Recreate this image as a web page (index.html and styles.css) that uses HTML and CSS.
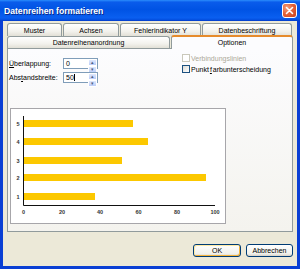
FILE: index.html
```html
<!DOCTYPE html>
<html lang="de">
<head>
    <meta charset="UTF-8">
    <title>Datenreihen formatieren</title>
    <link rel="stylesheet" href="styles.css">
</head>
<body>
    <div class="window">
        <div class="titlebar">
            <span class="title">Datenreihen formatieren</span>
            <span class="close">
                <svg width="9" height="9" viewBox="0 0 9 9"><path d="M1.5 1.5 L7.5 7.5 M7.5 1.5 L1.5 7.5" stroke="#fff" stroke-width="1.6" stroke-linecap="round"/></svg>
            </span>
        </div>

        <div class="dialog">
            <div class="tab-row top-row">
                <div class="tab tab-muster">Muster</div>
                <div class="tab tab-achsen">Achsen</div>
                <div class="tab tab-fehler">Fehlerindikator Y</div>
                <div class="tab tab-beschr">Datenbeschriftung</div>
            </div>
            <div class="tab-row bottom-row">
                <div class="tab tab-anord">Datenreihenanordnung</div>
                <div class="tab tab-opt active">Optionen</div>
            </div>

            <div class="panel">
                <div class="settings">
                    <div class="fields">
                        <label><u>Ü</u>berlappung:</label>
                        <div class="spin">
                            <span class="spin-value">0</span>
                            <span class="spin-btns"><span>&#9652;</span><span>&#9662;</span></span>
                        </div>
                        <label>Abs<u>t</u>andsbreite:</label>
                        <div class="spin">
                            <span class="spin-value">50<span class="caret"></span></span>
                            <span class="spin-btns"><span>&#9652;</span><span>&#9662;</span></span>
                        </div>
                    </div>
                    <div class="checks">
                        <div class="check disabled"><span class="box"></span>Verbindungslinien</div>
                        <div class="check"><span class="box"></span>Punkt<u>f</u>arbunterscheidung</div>
                    </div>
                </div>

                <div class="chart">
                    <svg width="214" height="114" viewBox="11 109 214 114">
                        <g fill="#fcc800">
                            <rect x="24" y="120" width="109" height="7"/>
                            <rect x="24" y="138" width="124" height="7"/>
                            <rect x="24" y="157" width="98" height="7"/>
                            <rect x="24" y="174" width="182" height="7"/>
                            <rect x="24" y="193" width="71" height="7"/>
                        </g>
                        <path d="M23.5 116 V205.5 H215" fill="none" stroke="#111" stroke-width="1"/>
                        <g font-family="Liberation Sans, Arial, sans-serif" font-size="5.5" font-weight="bold" fill="#333" text-anchor="middle">
                            <text x="18" y="125.5">5</text>
                            <text x="18" y="143.5">4</text>
                            <text x="18" y="162.5">3</text>
                            <text x="18" y="179.5">2</text>
                            <text x="18" y="198.5">1</text>
                            <text x="23.5" y="214">0</text>
                            <text x="62" y="214">20</text>
                            <text x="100" y="214">40</text>
                            <text x="138.5" y="214">60</text>
                            <text x="177" y="214">80</text>
                            <text x="215" y="214">100</text>
                        </g>
                    </svg>
                </div>
            </div>

            <div class="buttons">
                <button class="btn default">OK</button>
                <button class="btn">Abbrechen</button>
            </div>
        </div>
    </div>
</body>
</html>
```

FILE: styles.css
```css
body {
    margin: 0;
    font-family: "Liberation Sans", Arial, sans-serif;
    font-size: 7px;
    color: #000;
    background: #ffffff;
}

.window {
    width: 300px;
    height: 269px;
    display: flex;
    flex-direction: column;
    background: #0a3fd4;
}

.titlebar {
    height: 21px;
    flex: none;
    display: flex;
    align-items: center;
    justify-content: space-between;
    padding: 0 3px 0 4px;
    background: linear-gradient(to bottom, #2b8dfc 0%, #0a5ceb 10%, #0053e4 45%, #0a5ff0 85%, #0450e0 94%, #0339c8 100%);
}

.title {
    color: #fff;
    font-weight: bold;
    font-size: 8.6px;
    text-shadow: 1px 1px 0 #0a2a8a;
}

.close {
    width: 13px;
    height: 13px;
    display: flex;
    align-items: center;
    justify-content: center;
    border: 1px solid #fff;
    border-radius: 3px;
    background: radial-gradient(circle at 30% 30%, #f4a080 0%, #e3643a 45%, #c8401a 100%);
}

.dialog {
    flex: 1;
    margin: 0 3px 3px;
    padding: 2px 4px 0;
    background: #ece9d8;
    display: flex;
    flex-direction: column;
}

/* tabs */
.tab-row {
    display: flex;
    gap: 1px;
}

.top-row {
    height: 13px;
}

.bottom-row {
    height: 12px;
    gap: 1px;
}

.tab {
    box-sizing: border-box;
    display: flex;
    align-items: center;
    justify-content: center;
    border: 1px solid #919b9c;
    border-bottom: none;
    border-radius: 3px 3px 0 0;
    background: linear-gradient(to bottom, #ffffff, #f3f2ed 60%, #e2e0d6);
}

.tab-muster { width: 55px; }
.tab-achsen { width: 56px; }
.tab-fehler { width: 81px; }
.tab-beschr { width: 90px; }
.tab-anord { width: 163px; }
.tab-opt { flex: 1; }

.tab.active {
    position: relative;
    z-index: 1;
    height: 14px;
    margin-top: -1px;
    margin-bottom: -1px;
    border-top: 2px solid #e68b2c;
    background: #fcfcfe;
    padding-bottom: 1px;
}

/* panel */
.panel {
    box-sizing: border-box;
    height: 184px;
    border: 1px solid #919b9c;
    background: linear-gradient(to bottom, #fcfcfe, #f4f3ee);
    padding: 0 0 0 1px;
}

.settings {
    display: grid;
    grid-template-columns: 173px 1fr;
    height: 35px;
}

.fields {
    display: grid;
    grid-template-columns: 54px 35px;
    row-gap: 3px;
    align-items: center;
    margin-top: 9px;
    align-self: start;
}

.spin {
    box-sizing: border-box;
    height: 11px;
    display: flex;
    border: 1px solid #7f9db9;
    background: #fff;
}

.spin-value {
    flex: 1;
    padding-left: 2px;
    line-height: 9px;
}

.caret {
    display: inline-block;
    width: 1px;
    height: 7px;
    background: #000;
    vertical-align: -1px;
}

.spin-btns {
    width: 9px;
    display: flex;
    flex-direction: column;
    gap: 0;
}

.spin-btns span {
    flex: 1;
    display: flex;
    align-items: center;
    justify-content: center;
    font-size: 5px;
    line-height: 1;
    color: #4d6185;
    background: linear-gradient(to bottom, #dfe8fd, #bccdf8);
    border: 1px solid #fff;
    border-radius: 1px;
}

.checks {
    margin-top: 4px;
    display: flex;
    flex-direction: column;
    gap: 1px;
}

.check {
    height: 10px;
    display: flex;
    align-items: center;
    gap: 1px;
}

.check .box {
    box-sizing: border-box;
    width: 8px;
    height: 8px;
    border: 1px solid #1c5180;
    background: linear-gradient(135deg, #dcdcd7, #ffffff);
}

.check.disabled {
    color: #aca899;
}

.check.disabled .box {
    border-color: #cac8bb;
    background: #fff;
}

.chart {
    box-sizing: border-box;
    width: 216px;
    height: 116px;
    margin: 24px 0 0 1px;
    border: 1px solid #a7a6aa;
    background: #fff;
}

.chart svg {
    display: block;
}

/* buttons */
.buttons {
    display: flex;
    justify-content: flex-end;
    gap: 5px;
    margin-top: 12px;
}

.btn {
    box-sizing: border-box;
    height: 13px;
    padding: 0;
    font-family: "Liberation Sans", Arial, sans-serif;
    font-size: 7px;
    color: #000;
    border: 1px solid #003c74;
    border-radius: 3px;
    background: linear-gradient(to bottom, #ffffff, #f0f0ea 80%, #d6d0c5);
}

.btn.default {
    width: 48px;
    box-shadow: inset -1px -1px 0 #f5b43c, inset 1px 1px 0 #fee9a4;
}

.btn:not(.default) {
    width: 47px;
}
```
